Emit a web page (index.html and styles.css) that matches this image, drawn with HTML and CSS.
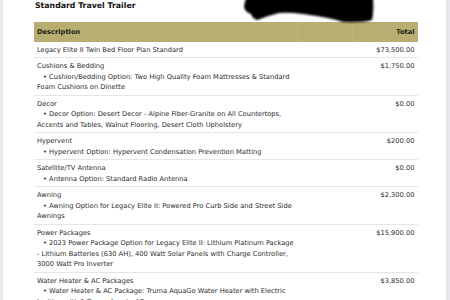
FILE: index.html
```html
<!DOCTYPE html>
<html>
<head>
<meta charset="utf-8">
<link rel="stylesheet" href="styles.css">
</head>
<body>
<div class="page">
  <h1 class="title">Standard Travel Trailer</h1>
  <table class="items">
    <thead>
      <tr><th class="desc">Description</th><th class="qty"></th><th class="total">Total</th></tr>
    </thead>
    <tbody>
      <tr><td class="desc">Legacy Elite II Twin Bed Floor Plan Standard</td><td class="qty"></td><td class="total">$73,500.00</td></tr>
      <tr><td class="desc">Cushions &amp; Bedding<div class="opt">• Cushion/Bedding Option: Two High Quality Foam Mattresses &amp; Standard Foam Cushions on Dinette</div></td><td class="qty"></td><td class="total">$1,750.00</td></tr>
      <tr><td class="desc">Decor<div class="opt">• Decor Option: Desert Decor - Alpine Fiber-Granite on All Countertops, Accents and Tables, Walnut Flooring, Desert Cloth Upholstery</div></td><td class="qty"></td><td class="total">$0.00</td></tr>
      <tr><td class="desc">Hypervent<div class="opt">• Hypervent Option: Hypervent Condensation Prevention Matting</div></td><td class="qty"></td><td class="total">$200.00</td></tr>
      <tr><td class="desc">Satellite/TV Antenna<div class="opt">• Antenna Option: Standard Radio Antenna</div></td><td class="qty"></td><td class="total">$0.00</td></tr>
      <tr><td class="desc">Awning<div class="opt">• Awning Option for Legacy Elite II: Powered Pro Curb Side and Street Side Awnings</div></td><td class="qty"></td><td class="total">$2,300.00</td></tr>
      <tr><td class="desc">Power Packages<div class="opt">• 2023 Power Package Option for Legacy Elite II: Lithium Platinum Package - Lithium Batteries (630 AH), 400 Watt Solar Panels with Charge Controller, 3000 Watt Pro Inverter</div></td><td class="qty"></td><td class="total">$15,900.00</td></tr>
      <tr><td class="desc">Water Heater &amp; AC Packages<div class="opt">• Water Heater &amp; AC Package: Truma AquaGo Water Heater with Electric Ignition with 1 Truma Aventa AC</div></td><td class="qty"></td><td class="total">$3,850.00</td></tr>
    </tbody>
  </table>
  <svg class="redact" width="134" height="26" viewBox="0 0 134 26">
    <defs><filter id="b" x="-10%" y="-30%" width="120%" height="160%"><feGaussianBlur stdDeviation="1.1"/></filter></defs>
    <path filter="url(#b)" fill="#000" d="M4 -3 L130 -3 Q131 12 129 20 Q120 23 100 22 Q85 17 60 14 Q45 12 36 13 Q24 16 14 20 Q9 18 8 14 Q2 12 1 7 Q1 2 4 -3 Z"/>
  </svg>
</div>
</body>
</html>
```

FILE: styles.css
```css
html, body {
  margin: 0;
  padding: 0;
  background: #ffffff;
}
.page {
  position: relative;
  width: 450px;
  height: 300px;
  overflow: hidden;
  border-left: 3px solid #ebebef;
  border-right: 4px solid #e7e7ed;
  box-sizing: border-box;
  padding-left: 31px;
  font-family: "DejaVu Sans", Verdana, sans-serif;
  color: #2a2a2a;
}
.title {
  margin: 0;
  padding-left: 1px;
  font-size: 7.8px;
  line-height: 12px;
  font-weight: bold;
  color: #111;
  height: 22px;
}
.items {
  border-collapse: collapse;
  width: 381px;
  font-size: 6.7px;
  line-height: 10.6px;
  table-layout: fixed;
}
.items th {
  background: #b8ae72;
  height: 20px;
  padding: 0 3px;
  font-weight: bold;
  color: #1f1f10;
  text-align: left;
  vertical-align: middle;
}
.items th.qty {
  border-left: 1px solid #bdb478;
  border-right: 1px solid #bdb478;
}
.items th.total {
  text-align: right;
}
.items td {
  vertical-align: top;
  padding: 2.75px 3px 2px 3px;
  border-bottom: 1px solid #e6e6e6;
}
.items .desc {
  width: 259.5px;
  padding-right: 0;
}
.items .qty {
  width: 48px;
}
.items .total {
  width: 59px;
  text-align: right;
}
.opt {
  text-indent: 6px;
}
.redact {
  position: absolute;
  left: 240px;
  top: 0;
}
```
